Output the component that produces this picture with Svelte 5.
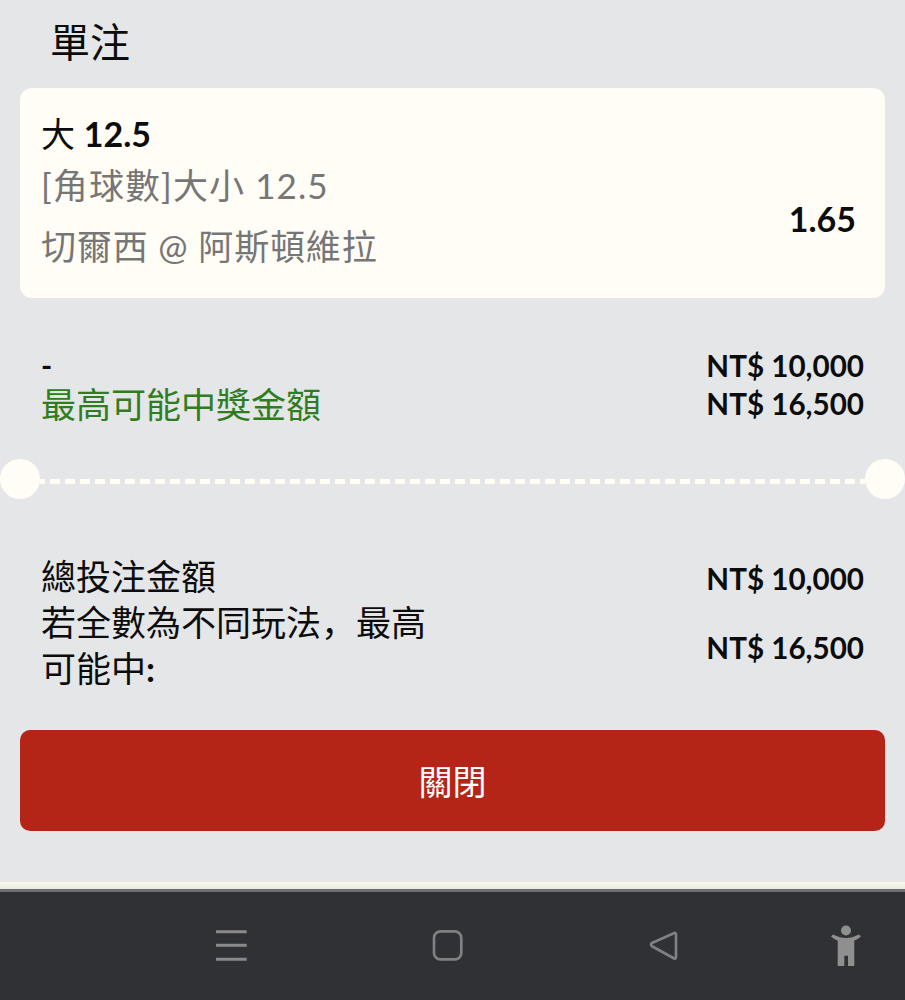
<script>
	const summary = [
		{ label: '總投注金額', value: 'NT$ 10,000' },
		{ label: '若全數為不同玩法，最高可能中', colon: true, value: 'NT$ 16,500' },
	];
</script>

<div class="page">
	<main class="sheet">
		<h1 class="title">單注</h1>

		<section class="card">
			<div class="info">
				<div class="pick">大 <b>12.5</b></div>
				<div class="market">[角球數]大小 12.5</div>
				<div class="teams">切爾西 @ 阿斯頓維拉</div>
			</div>
			<div class="odds">1.65</div>
		</section>

		<section class="stake">
			<div class="line">
				<span class="dash">-</span>
				<span class="amount">NT$ 10,000</span>
			</div>
			<div class="line">
				<span class="win">最高可能中獎金額</span>
				<span class="amount">NT$ 16,500</span>
			</div>
		</section>

		<div class="divider">
			<span class="notch"></span>
			<span class="dots"></span>
			<span class="notch"></span>
		</div>

		<section class="summary">
			{#each summary as row}
				<div class="row">
					<span class="label">{row.label}{#if row.colon}<b>:</b>{/if}</span>
					<span class="amount">{row.value}</span>
				</div>
			{/each}
		</section>

		<button class="close">關閉</button>
	</main>

	<div class="edge"></div>
	<nav class="navbar">
		<svg class="ico" width="34" height="34" viewBox="0 0 34 34" fill="none" stroke="#8a8a8a" stroke-width="3">
			<path d="M2 2.700h30.700M2 16.300h30.700M2 30.300h30.700" />
		</svg>
		<svg class="ico" width="34" height="34" viewBox="0 0 34 34" fill="none" stroke="#808082" stroke-width="2.700">
			<rect x="4" y="2.400" width="27.300" height="28" rx="6.500" />
		</svg>
		<svg class="ico" width="34" height="34" viewBox="0 0 34 34" fill="none" stroke="#808082" stroke-width="2.700" stroke-linejoin="round">
			<path d="M30 5.500V28c0 1.500-1.200 2-2.200 1.300L6 17.300c-1.300-.9-1.300-2.500 0-3.400L27.800 4.200C28.800 3.500 30 4 30 5.500z" />
		</svg>
		<svg class="ico person" width="32" height="41" viewBox="0 0 32 41" fill="#8f8f8f">
			<circle cx="16" cy="5.500" r="5" />
			<path d="M1 11.500 3 9.500C8 12 12 13 16 13s8-1 13-3.500l2 2c-3 2.500-5 3.500-6.700 4V41H18V30.700h-3.700V41H7.700V15.500C6 15 4 14 1 11.500z" />
		</svg>
	</nav>
</div>

<style>
	:global(body) {
		margin: 0;
	}
	.page {
		width: 905px;
		height: 1000px;
		display: flex;
		flex-direction: column;
		background: #e4e6e8;
		font-family: Lato, "Noto Sans CJK SC", sans-serif;
		color: #0c0c0c;
		overflow: hidden;
	}
	.sheet {
		flex: 1;
		display: flex;
		flex-direction: column;
		padding: 0 20px;
	}
	.title {
		margin: 0;
		height: 88px;
		padding: 16px 0 0 30px;
		box-sizing: border-box;
		font-size: 40px;
		line-height: 52px;
		font-weight: 400;
	}
	.card {
		height: 210px;
		box-sizing: border-box;
		display: flex;
		justify-content: space-between;
		align-items: center;
		padding: 21px 29px 0 21px;
		background: #fffdf5;
		border-radius: 12px;
	}
	.info {
		align-self: flex-start;
	}
	.pick {
		font-size: 34px;
		line-height: 50px;
	}
	.pick b {
		font-weight: 700;
	}
	.market,
	.teams {
		font-size: 35px;
		line-height: 50px;
		color: #767676;
	}
	.market {
		margin-top: 1px;
		letter-spacing: 1.100px;
	}
	.teams {
		margin-top: 11px;
		letter-spacing: 0.850px;
	}
	.odds {
		font-size: 34px;
		font-weight: 700;
		margin-top: 30px;
	}
	.stake {
		margin-top: 48px;
		padding: 0 21px;
	}
	.line {
		display: flex;
		justify-content: space-between;
		align-items: center;
		height: 38px;
	}
	.amount {
		font-size: 29.600px;
		font-weight: 700;
		white-space: nowrap;
	}
	.dash {
		font-size: 30px;
		font-weight: 700;
	}
	.win {
		font-size: 35px;
		color: #2f7d20;
		margin-top: -2px;
	}
	.divider {
		margin: 37px -20px 0;
		display: flex;
		align-items: center;
	}
	.notch {
		width: 40px;
		height: 40px;
		border-radius: 50%;
		background: #fffdf5;
		flex: none;
	}
	.dots {
		flex: 1;
		height: 5px;
		margin-top: 4px;
		background: repeating-linear-gradient(90deg, #fffdf5 0 10px, transparent 10px 15px) 10px 0;
	}
	.summary {
		margin-top: 54px;
		padding: 0 21px;
	}
	.row {
		display: flex;
		justify-content: space-between;
		align-items: center;
	}
	.row .amount {
		padding-top: 4px;
	}
	.label {
		width: 400px;
		font-size: 35px;
		line-height: 46px;
	}
	.close {
		margin-top: 38.500px;
		height: 101px;
		border: 0;
		border-radius: 10px;
		background: #b42518;
		color: #fff;
		font: inherit;
		font-size: 34px;
	}
	.edge {
		height: 10px;
		background: linear-gradient(#fbf9ee, #ece9df);
		border-bottom: 3px solid #6e6f71;
		box-sizing: border-box;
	}
	.navbar {
		height: 108px;
		background: #303135;
		position: relative;
	}
	.ico {
		position: absolute;
		top: 37px;
	}
	.ico:nth-child(1) { left: 214px; }
	.ico:nth-child(2) { left: 430px; }
	.ico:nth-child(3) { left: 646px; }
	.person { left: 830px !important; top: 33px; }
</style>
